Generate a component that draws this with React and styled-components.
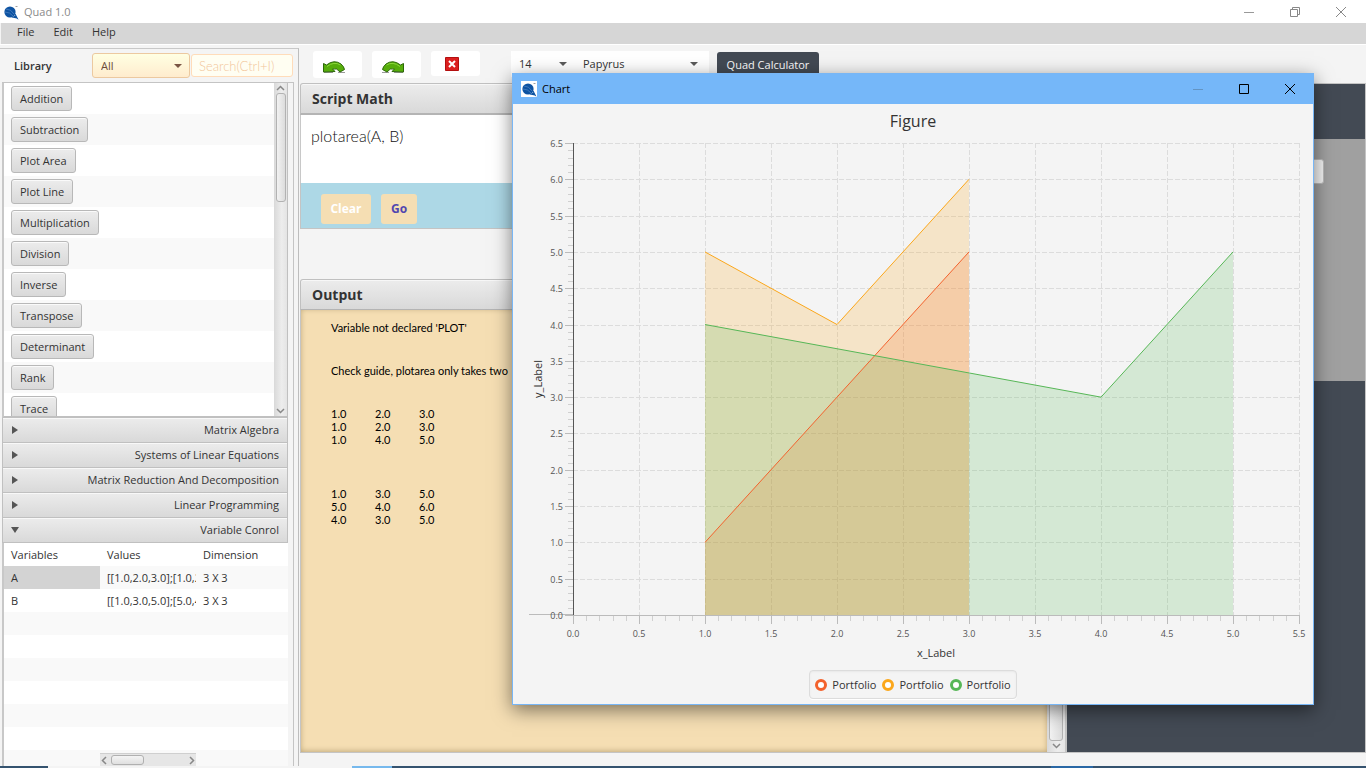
import React from 'react';
import styled, { createGlobalStyle, css } from 'styled-components';

const Global = createGlobalStyle`
  * { box-sizing: border-box; }
  body { margin: 0; background: #f4f4f4; color: #333; font-family: "Open Sans", "Noto Sans", sans-serif; font-size: 11px; line-height: 16px; overflow: hidden; }
  button, input, select, textarea { font: inherit; color: inherit; margin: 0; padding: 0; border: 0; border-radius: 0; background: none; outline: 0; }
  button { white-space: nowrap; }
`;

const ui = '"Open Sans", "Noto Sans", sans-serif';
const geometric = 'Lato, "Open Sans", sans-serif';
const steel = 'linear-gradient(#ececec, #d9d9d9)';

const Desktop = styled.div`display: flex; flex-direction: column; height: 100vh; position: relative; overflow: hidden;`;

const TitleBar = styled.header`
  display: flex; align-items: center; height: 23px; flex: none; background: #fff; color: #8a8a8a; padding: 0 2px 0 3px;
`;
const AppName = styled.span`flex: 1; padding-left: 5px;`;
const WindowButton = styled.button`
  width: 46px; height: 20px; display: flex; align-items: center; justify-content: center; color: ${p => p.$tone};
`;
const MenuBar = styled.nav`
  display: flex; gap: 1px; height: 21px; flex: none; background: #d6d6d6; margin-left: 1px; padding-left: 7px;
`;
const MenuItem = styled.button`padding: 0 9px; height: 18px;`;

const Body = styled.div`
  flex: 1; min-height: 0; display: grid; grid-template-columns: 299px minmax(0, 1fr) 300px; border-top: 1px solid #fff; padding-bottom: 2px;
`;

const Sidebar = styled.aside`
  display: flex; flex-direction: column; min-height: 0; margin-top: 3px; border-top: 1px solid #c8c8c8; border-right: 1px solid #bdbdbd;
`;
const LibraryBar = styled.div`display: flex; align-items: center; height: 33px; flex: none; padding: 0 4px 0 14px;`;
const LibraryLabel = styled.label`width: 78px; font-weight: 600;`;
const Select = styled.span`
  display: flex; align-items: center; position: relative; width: ${p => p.$w}px; height: ${p => p.$h}px;
  select { appearance: none; width: 100%; height: 100%; padding-left: 8px; font-family: ${ui}; }
  &::after {
    content: ""; position: absolute; right: ${p => p.$arrow}px; top: 50%; margin-top: -2px;
    border: 4px solid transparent; border-top-color: #5a5a5a; border-bottom: 0; pointer-events: none;
  }
  ${p => p.$warm ? css`
    color: #6b4b3a; margin-right: 1px;
    select { border: 1px solid #ecc9a0; border-radius: 3px; background: linear-gradient(#ffffe2, #ffecce); }
    &::after { border-top-color: #7a5544; }
  ` : css`select { background: #fff; }`}
`;
const Search = styled.input`
  width: 102px; height: 23px; border: 1px solid #ffdcba; border-radius: 3px; background: #fffef2; padding-left: 7px;
  font-family: ${geometric}; font-weight: 300; font-size: 13px;
  &::placeholder { color: #f2c69b; opacity: 1; }
`;
const SideFrame = styled.div`
  flex: 1; min-height: 0; display: flex; flex-direction: column; margin: 0 4px 0 2px; padding-right: 5px;
  border: solid #c4c4c4; border-width: 1px 1px 0 0;
`;
const ListPane = styled.div`
  display: flex; flex: none; height: 335px; border-left: 2px solid #c8c8c8; border-right: 1px solid #c0c0c0; border-bottom: 2px solid #c0c0c0; overflow: hidden;
`;
const FunctionList = styled.ul`list-style: none; margin: 0; padding: 0; flex: 1;`;
const FunctionItem = styled.li`height: 31px; padding: 3px 7px; &:nth-child(odd) { background: #fff; } &:nth-child(even) { background: #f9f9f9; }`;
const SteelButton = styled.button`
  height: 25px; padding: 0 8px; border: 1px solid #b8b8b8; border-radius: 3px; background: ${steel}; box-shadow: inset 0 1px #fafafa;
`;
const VScroll = styled.div`
  width: ${p => p.$w}px; display: flex; flex-direction: column; align-items: center; justify-content: space-between;
  background: linear-gradient(90deg, #d9d9d9, #ededed 60%, #e4e4e4); padding: ${p => p.$pad}px 0;
`;
const VThumb = styled.span`
  width: ${p => p.$w}px; height: 109px; border: 1px solid #b2b2b2; border-radius: 3px; background: linear-gradient(90deg, #f2f2f2, #dcdcdc);
`;
const ScrollSpace = styled.span`flex: 1;`;
const PaneHeader = styled.button`
  display: flex; align-items: center; justify-content: space-between; flex: none; height: 25px; padding: 0 8px;
  background: ${steel}; border: solid #c0c0c0; border-width: 0 1px 1px; box-shadow: inset 0 1px #f8f8f8;
`;
const TableArea = styled.div`flex: 1; min-height: 0; overflow: hidden; position: relative; border-left: 2px solid #c8c8c8;`;
const VarTable = styled.table`
  width: 100%; border-collapse: collapse; table-layout: fixed;
  tr { height: 23px; background: #fff; }
  tbody tr:nth-child(odd) { background: #f9f9f9; }
  th, td { text-align: left; font-weight: 400; padding: 0 0 0 7px; white-space: nowrap; }
  td.selected { background: #d3d3d3; }
`;
const Col = styled.col`width: ${p => p.$w}px;`;
const Clip = styled.div`overflow: hidden; height: 16px;`;
const HScroll = styled.div`
  position: absolute; left: 96px; bottom: 0; width: 96px; height: 13px; display: flex; align-items: center; justify-content: space-between;
  background: #e6e6e6; border-top: 1px solid #cfcfcf;
`;
const HThumb = styled.span`width: 33px; height: 10px; margin-right: 42px; border: 1px solid #b0b0b0; border-radius: 3px; background: linear-gradient(#f4f4f4, #e0e0e0);`;

const Main = styled.main`display: flex; flex-direction: column; min-height: 0; padding: 0 0 13px 1px;`;
const Toolbar = styled.div`display: flex; height: 38px; flex: none; padding: 6px 0 0 13px;`;
const ToolButton = styled.button`
  width: 49px; height: ${p => p.$h}px; padding: ${p => p.$drop || 0}px 8px 0 0; margin-right: 10px; border-radius: 3px; background: #fff;
  display: flex; justify-content: center; align-items: center;
`;
const Fonts = styled.div`display: flex; height: 27px; margin: 0 8px 0 21px;`;
const CalcButton = styled.button`width: 102px; height: 25px; margin-top: 1px; border-radius: 3px; background: #434a54; color: #fff;`;
const PanelTitle = styled.h2`
  margin: 0; height: ${p => p.$h}px; flex: none; padding: 0 11px; font-size: 14px; line-height: 30px; font-weight: 700;
  background: ${steel}; border: 1px solid #c0c0c0; border-bottom: ${p => p.$line}px solid #b4b4b4; border-radius: 3px 3px 0 0; box-shadow: inset 0 1px #f7f7f7;
`;
const Script = styled.textarea`
  display: block; height: 68px; flex: none; resize: none; background: #fff; padding: 11px 10px; border-left: 1px solid #c8c8c8;
  font-family: ${geometric}; font-weight: 300; font-size: 16px; line-height: 20px; color: #111;
`;
const Actions = styled.div`
  display: flex; gap: 10px; height: 46px; flex: none; padding: 11px 20px; background: #add8e6; border: solid #c4c4c4; border-width: 0 1px 1px; margin-bottom: 50px;
`;
const ActionButton = styled.button`
  height: 30px; width: ${p => p.$w}px; border-radius: 3px; background: #f5deb3; font-size: 12px; font-weight: 700; color: ${p => p.$c};
`;
const OutputRow = styled.div`flex: 1; min-height: 0; display: flex; border: 1px solid #c4c4c4; border-top: 0;`;
const Output = styled.div`
  flex: 1; min-width: 0; background: #f5deb3; padding: 11px 30px; box-shadow: inset 0 -1px 6px -1px #b09a6c; color: #000;
  font-family: ${geometric}; font-size: 11px; line-height: 13px;
`;
const Message = styled.p`margin: 0 0 30px; white-space: nowrap;`;
const Matrix = styled.table`
  border-collapse: collapse; margin-bottom: 41px;
  td { width: 44px; height: 13px; padding: 0; }
`;

const Right = styled.section`
  display: flex; flex-direction: column; margin: 38px 0 13px; border: 1px solid #c4c4c4; background: #434a54;
`;
const Display = styled.div`height: 55px; flex: none;`;
const Keys = styled.div`height: 242px; flex: none; background: #a0a0a0; padding: 20px 41px; display: flex; flex-direction: column; align-items: flex-end;`;
const Entry = styled.input`width: 216px; height: 25px; border: 1px solid #bbb; border-radius: 3px; background: #f4f4f4;`;

const Taskbar = styled.footer`
  display: flex; position: absolute; left: 0; right: 0; bottom: 0; height: 2px; background: #35536f;
`;
const Task = styled.span`height: 2px; flex: ${p => p.$f}; background: ${p => p.$c};`;

const Dialog = styled.section`
  position: absolute; left: 512px; top: 73px; width: 802px; border: 1px solid #78b6f5; background: #f4f4f4;
  box-shadow: 0 5px 18px rgba(0, 0, 0, .5);
`;
const DialogBar = styled.header`display: flex; align-items: center; height: 30px; background: #75b7f9; color: #000; padding-left: 8px;`;
const LogoTile = styled.span`width: 16px; height: 16px; background: #fff; display: flex;`;
const ChartTitle = styled.h1`margin: 0; padding-top: 4px; height: 34px; font-size: 16px; line-height: 26px; font-weight: 400; text-align: center;`;
const Plot = styled.svg`
  display: block; width: 100%; height: auto; font-family: ${ui};
  .tick { font-size: 9px; fill: #555; }
  .axis { font-size: 11px; fill: #333; text-anchor: middle; }
`;
const LegendRow = styled.div`display: flex; justify-content: center; height: 38px; padding-top: 4px;`;
const Legend = styled.ul`
  list-style: none; margin: 0; height: 29px; display: flex; align-items: center; gap: 6px; padding: 0 5px;
  border: 1px solid #dcdcdc; border-radius: 4px; box-shadow: 0 1px #fff, inset 0 1px 2px #e8e8e8;
`;
const LegendItem = styled.li`display: flex; align-items: center; gap: 5px;`;
const Ring = styled.span`width: 12px; height: 12px; border-radius: 50%; border: 3px solid ${p => p.$c}; background: #fff;`;

const Logo = () => (
  <svg width="16" height="16" viewBox="0 0 16 16" aria-hidden="true">
    <circle cx="7" cy="8" r="5.600" fill="#0d53a2" />
    <path d="M8 10l6 4-2-4M9 13l5 1" fill="none" stroke="#0d53a2" strokeWidth="1.200" />
    <path d="M3 5q5 0 8 5M2 8q5 0 8 4" fill="none" stroke="#5f8fcb" strokeWidth=".6" />
    <path d="M12.500 2.500h2" stroke="#888" strokeWidth=".8" />
  </svg>
);
const Minimize = () => <svg width="10" height="10"><path d="M0 5.500h10" stroke="currentColor" /></svg>;
const Maximize = () => <svg width="10" height="10"><path d="M.5.5h9v9h-9z" fill="none" stroke="currentColor" /></svg>;
const Restore = () => <svg width="10" height="10"><path d="M.5 2.500h7v7h-7zM2.500 2.500v-2h7v7h-2" fill="none" stroke="currentColor" /></svg>;
const Close = () => <svg width="10" height="10"><path d="M0 0l10 10M10 0L0 10" stroke="currentColor" /></svg>;
const Chevron = ({ d }) => <svg width="9" height="9" viewBox="0 0 9 9" aria-hidden="true"><path d={d} fill="none" stroke="#888" strokeWidth="1.500" /></svg>;
const Triangle = ({ open }) => <svg width="8" height="9" aria-hidden="true"><path d={open ? 'M0 1h8L4 7Z' : 'M1 0v8l6-4Z'} fill="#555" /></svg>;
const CurvedArrow = ({ flip }) => (
  <svg width="24" height="14" viewBox="0 0 24 14" aria-hidden="true">
    <g transform={flip ? 'matrix(-1 0 0 1 24 0)' : undefined}>
      <path d="M2 12.500h9M16 12.500h7" stroke="#999" />
      <path d="M1.500 3.500 4.500 5Q12-1 19 4q3 2.500 3.500 5.500L18 12Q15 7.500 10.500 9L13 11.500 1.500 12Z" fill="#56ad0b" stroke="#2c6809" />
      <path d="M5 6.500Q12 1 18.500 5" fill="none" stroke="#8bd63a" />
    </g>
  </svg>
);
const RedCross = () => (
  <svg width="14" height="14" aria-hidden="true">
    <path d="M.5.5h13v13H.5z" fill="#db1f1f" stroke="#b30f0f" />
    <path d="M4 4l6 6M10 4l-6 6" stroke="#fff" strokeWidth="2" />
  </svg>
);

const functions = ['Addition', 'Subtraction', 'Plot Area', 'Plot Line', 'Multiplication', 'Division', 'Inverse', 'Transpose', 'Determinant', 'Rank', 'Trace'];
const panes = ['Matrix Algebra', 'Systems of Linear Equations', 'Matrix Reduction And Decomposition', 'Linear Programming'];
const matrices = [
  [['1.0', '2.0', '3.0'], ['1.0', '2.0', '3.0'], ['1.0', '4.0', '5.0']],
  [['1.0', '3.0', '5.0'], ['5.0', '4.0', '6.0'], ['4.0', '3.0', '5.0']],
];
const series = [
  { color: '#f3622d', points: [[1, 1], [2, 3], [3, 5]] },
  { color: '#fba71b', points: [[1, 5], [2, 4], [3, 6]] },
  { color: '#57b757', points: [[1, 4], [4, 3], [5, 5]] },
];
const LEFT = 60, TOP = 5, BOTTOM = 477;
const px = v => LEFT + v * 132;
const py = v => BOTTOM - v * (BOTTOM - TOP) / 6.5;
const snap = v => Math.round(v) + 0.5;
const range = n => Array.from({ length: n }, (_, i) => i);

function AreaChart() {
  return (
    <Plot viewBox="0 0 800 528" role="img" aria-label="Area chart">
      {range(12).map(i => <path key={'v' + i} d={`M${snap(px(i / 2))} ${TOP}V${BOTTOM}`} stroke="#dcdcdc" strokeDasharray="5 2" />)}
      {range(13).map(i => <path key={'h' + i} d={`M${LEFT} ${snap(py((i + 1) / 2))}H786`} stroke="#dcdcdc" strokeDasharray="5 2" />)}
      {series.map(s => {
        const pts = s.points.map(([x, y]) => `${px(x)} ${py(y)}`).join('L');
        const [x0, x1] = [s.points[0][0], s.points[2][0]];
        return <path key={s.color} d={`M${px(x0)} ${BOTTOM}L${pts}L${px(x1)} ${BOTTOM}Z`} fill={s.color} fillOpacity=".2" />;
      })}
      {series.map(s => (
        <path key={s.color} d={'M' + s.points.map(([x, y]) => `${px(x)} ${py(y)}`).join('L')} fill="none" stroke={s.color} />
      ))}
      <path d={`M16 476.500H${LEFT}M${LEFT} 477.500H787`} stroke="#bbb" />
      {range(56).map(i => <path key={'x' + i} d={`M${snap(px(i / 10))} 478v${i % 5 ? 5 : 8}`} stroke={i % 5 ? '#d0d0d0' : '#bbb'} />)}
      {range(66).map(i => <path key={'y' + i} d={`M${LEFT} ${snap(py(i / 10))}h${i % 5 ? -5 : -8}`} stroke={i % 5 ? '#d0d0d0' : '#bbb'} />)}
      <path d={`M${LEFT + 0.5} ${TOP}V${BOTTOM}`} stroke="#555" />
      {range(12).map(i => <text key={'a' + i} className="tick" textAnchor="middle" x={px(i / 2)} y="499">{(i / 2).toFixed(1)}</text>)}
      {range(14).map(i => <text key={'b' + i} className="tick" textAnchor="end" x="50" y={Math.round(py(i / 2)) + 4}>{(i / 2).toFixed(1)}</text>)}
      <text className="axis" x="423" y="519">x_Label</text>
      <text className="axis" transform="translate(29 241) rotate(-90)">y_Label</text>
    </Plot>
  );
}

export default function App() {
  return (
    <Desktop>
      <Global />
      <TitleBar>
        <Logo />
        <AppName>Quad 1.0</AppName>
        <WindowButton $tone="#999" aria-label="Minimize"><Minimize /></WindowButton>
        <WindowButton $tone="#888" aria-label="Restore"><Restore /></WindowButton>
        <WindowButton $tone="#888" aria-label="Close"><Close /></WindowButton>
      </TitleBar>
      <MenuBar>{['File', 'Edit', 'Help'].map(m => <MenuItem key={m}>{m}</MenuItem>)}</MenuBar>
      <Body>
        <Sidebar>
          <LibraryBar>
            <LibraryLabel htmlFor="library">Library</LibraryLabel>
            <Select $w={98} $h={25} $arrow={8} $warm><select id="library"><option>All</option></select></Select>
            <Search aria-label="Search" placeholder="Search(Ctrl+I)" />
          </LibraryBar>
          <SideFrame>
            <ListPane>
              <FunctionList>{functions.map(f => <FunctionItem key={f}><SteelButton>{f}</SteelButton></FunctionItem>)}</FunctionList>
              <VScroll $w={13} $pad={1}>
                <Chevron d="M1 6l3.500-3.500L8 6" />
                <VThumb $w={10} />
                <ScrollSpace />
                <Chevron d="M1 3l3.500 3.500L8 3" />
              </VScroll>
            </ListPane>
            {panes.map(p => <PaneHeader key={p}><Triangle />{p}</PaneHeader>)}
            <PaneHeader aria-expanded="true"><Triangle open />Variable Conrol</PaneHeader>
            <TableArea>
              <VarTable>
                <colgroup><Col $w={96} /><Col $w={96} /><Col $w={92} /></colgroup>
                <thead><tr><th>Variables</th><th>Values</th><th>Dimension</th></tr></thead>
                <tbody>
                  <tr><td className="selected">A</td><td><Clip>[[1.0,2.0,3.0];[1.0,2</Clip></td><td>3 X 3</td></tr>
                  <tr><td>B</td><td><Clip>[[1.0,3.0,5.0];[5.0,4</Clip></td><td>3 X 3</td></tr>
                  {range(7).map(i => <tr key={i}><td /><td /><td /></tr>)}
                </tbody>
              </VarTable>
              <HScroll>
                <Chevron d="M6 1L2.500 4.500 6 8" />
                <HThumb />
                <Chevron d="M3 1l3.500 3.500L3 8" />
              </HScroll>
            </TableArea>
          </SideFrame>
        </Sidebar>
        <Main>
          <Toolbar>
            <ToolButton $h={27} $drop={5} aria-label="Undo"><CurvedArrow /></ToolButton>
            <ToolButton $h={27} $drop={5} aria-label="Redo"><CurvedArrow flip /></ToolButton>
            <ToolButton $h={25} aria-label="Clear script"><RedCross /></ToolButton>
            <Fonts>
              <Select $w={64} $h={26} $arrow={8}><select aria-label="Font size"><option>14</option></select></Select>
              <Select $w={134} $h={26} $arrow={11}><select aria-label="Font family"><option>Papyrus</option></select></Select>
            </Fonts>
            <CalcButton>Quad Calculator</CalcButton>
          </Toolbar>
          <PanelTitle $h={32} $line={2}>Script Math</PanelTitle>
          <Script aria-label="Script" spellCheck={false} defaultValue="plotarea(A, B)" />
          <Actions>
            <ActionButton $w={50} $c="#fff">Clear</ActionButton>
            <ActionButton $w={36} $c="#5046b0">Go</ActionButton>
          </Actions>
          <PanelTitle $h={31} $line={1}>Output</PanelTitle>
          <OutputRow>
            <Output>
              <Message>Variable not declared 'PLOT'</Message>
              <Message>Check guide, plotarea only takes two</Message>
              {matrices.map((m, k) => (
                <Matrix key={k}><tbody>{m.map((r, i) => <tr key={i}>{r.map((c, j) => <td key={j}>{c}</td>)}</tr>)}</tbody></Matrix>
              ))}
            </Output>
            <VScroll $w={18} $pad={2}>
              <ScrollSpace />
              <VThumb $w={14} />
              <Chevron d="M1 3l3.500 3.500L8 3" />
            </VScroll>
          </OutputRow>
        </Main>
        <Right>
          <Display />
          <Keys><Entry aria-label="Expression" /></Keys>
        </Right>
      </Body>
      <Taskbar>
        <Task $f="0 0 48px" $c="#35536f" />
        <Task $f="0 0 304px" $c="#f4f4f4" />
        <Task $f="0 0 40px" $c="#76b9ed" />
        <Task $f="1" $c="#35536f" />
        <Task $f="0 0 42px" $c="#2a68a5" />
        <Task $f="0 0 273px" $c="#35536f" />
      </Taskbar>
      <Dialog>
        <DialogBar>
          <LogoTile><Logo /></LogoTile>
          <AppName>Chart</AppName>
          <WindowButton $tone="#6394c3" aria-label="Minimize chart"><Minimize /></WindowButton>
          <WindowButton $tone="#000" aria-label="Maximize chart"><Maximize /></WindowButton>
          <WindowButton $tone="#000" aria-label="Close chart"><Close /></WindowButton>
        </DialogBar>
        <ChartTitle>Figure</ChartTitle>
        <AreaChart />
        <LegendRow>
          <Legend>{series.map(s => <LegendItem key={s.color}><Ring $c={s.color} />Portfolio</LegendItem>)}</Legend>
        </LegendRow>
      </Dialog>
    </Desktop>
  );
}
